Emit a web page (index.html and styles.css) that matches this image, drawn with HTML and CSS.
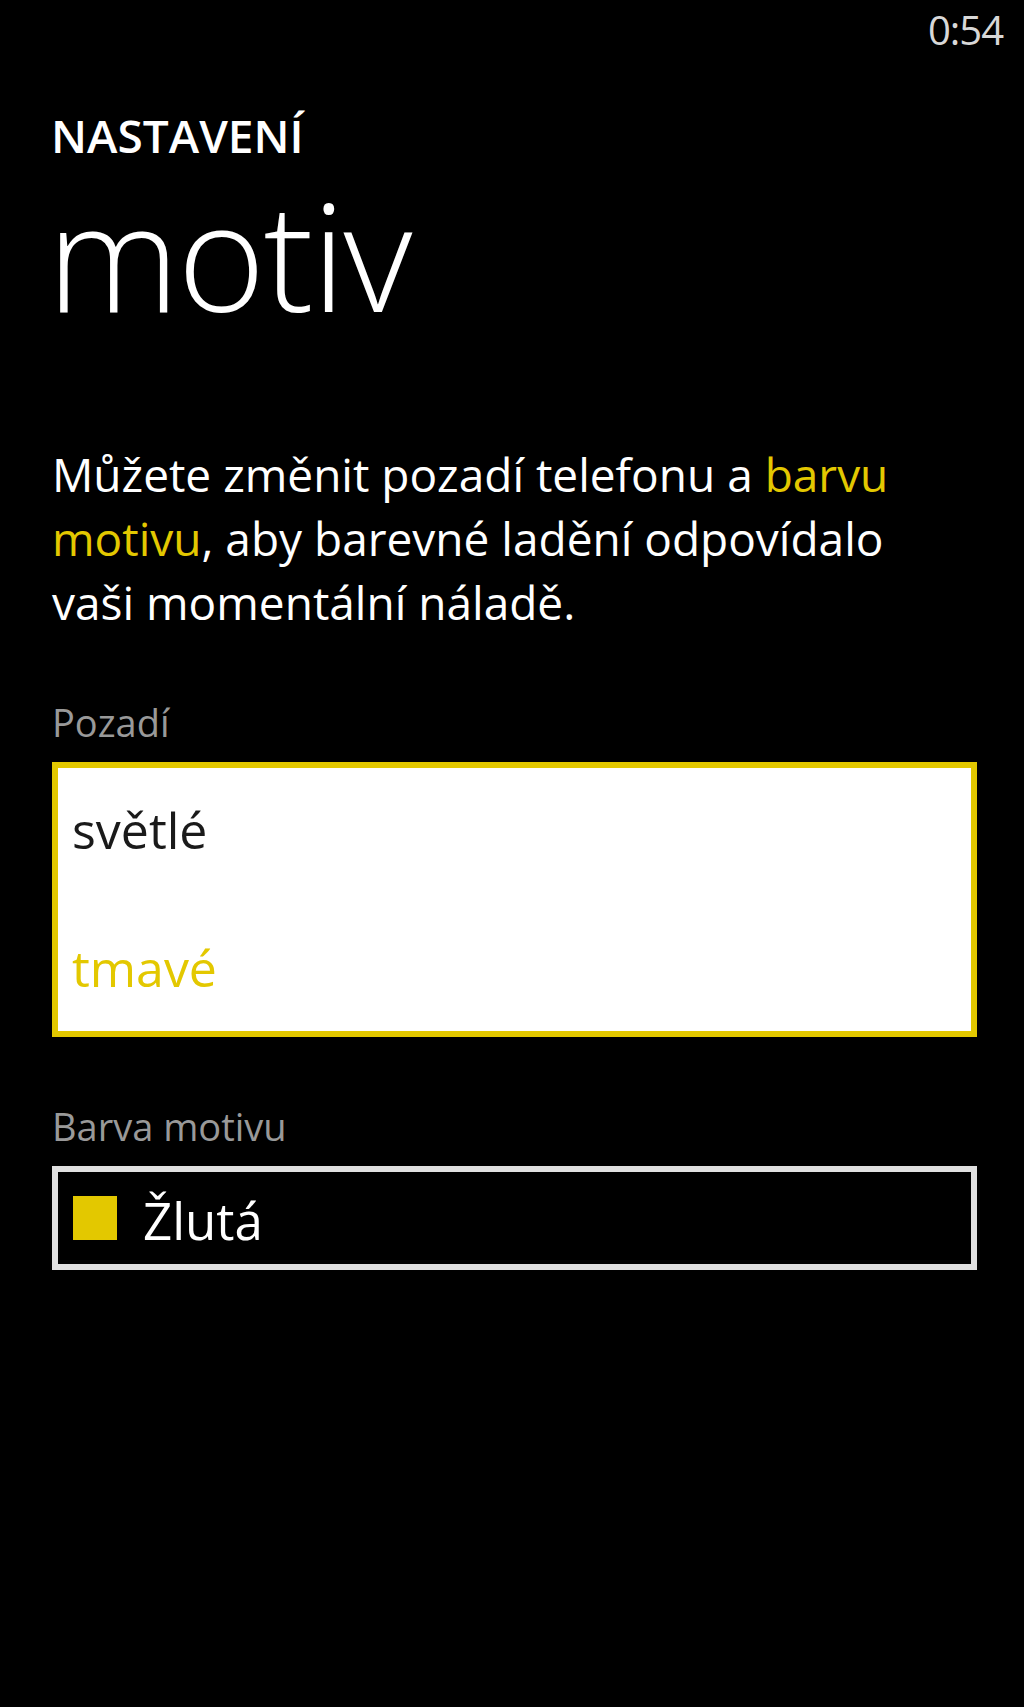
FILE: index.html
```html
<!DOCTYPE html>
<html lang="cs">
<head>
<meta charset="utf-8">
<title>motiv</title>
<link rel="stylesheet" href="styles.css">
</head>
<body>
<div class="phone">
  <div class="status-bar">
    <span class="clock">0:54</span>
  </div>
  <header class="page-header">
    <div class="app-title">NASTAVENÍ</div>
    <h1 class="page-title">motiv</h1>
  </header>
  <main class="content">
    <p class="intro">Můžete změnit pozadí telefonu a <span class="accent">barvu</span> <span class="accent">motivu</span>, aby barevné ladění odpovídalo vaši momentální náladě.</p>

    <div class="field-label">Pozadí</div>
    <div class="picker picker-open">
      <div class="picker-item">světlé</div>
      <div class="picker-item picker-item-selected">tmavé</div>
    </div>

    <div class="field-label field-label-second">Barva motivu</div>
    <div class="picker picker-closed">
      <span class="swatch"></span>
      <span class="picker-value">Žlutá</span>
    </div>
  </main>
</div>
</body>
</html>
```

FILE: styles.css
```css
html, body {
  margin: 0;
  padding: 0;
  background: #000;
}

body {
  font-family: "Open Sans", "Noto Sans", "DejaVu Sans", sans-serif;
  color: #fff;
}

.phone {
  width: 1024px;
  min-height: 1707px;
  background: #000;
}

.status-bar {
  height: 60px;
  display: flex;
  justify-content: flex-end;
  padding-right: 21px;
}

.clock {
  font-size: 40px;
  line-height: 60px;
  color: #d8d8d8;
  letter-spacing: -1px;
}

.page-header {
  padding: 46px 47px 0 51px;
}

.app-title {
  font-size: 46px;
  font-weight: 600;
  line-height: 58px;
  letter-spacing: 0;
}

.page-title {
  margin: 15px 0 0 -4px;
  font-size: 150px;
  font-weight: 300;
  line-height: 150px;
  letter-spacing: -2px;
}

.content {
  padding: 0 47px 0 52px;
}

.intro {
  margin: 113px 0 0 0;
  font-size: 46px;
  line-height: 64px;
}

.accent {
  color: #e3c800;
}

.field-label {
  margin-top: 63px;
  font-size: 38px;
  line-height: 50px;
  color: #999;
}

.field-label-second {
  margin-top: 64px;
}

.picker {
  margin-top: 15px;
  box-sizing: border-box;
}

.picker-open {
  height: 275px;
  border: 6px solid #e3c800;
  background: #fff;
  padding: 22px 14px 0 14px;
  display: flex;
  flex-direction: column;
  gap: 58px;
}

.picker-item {
  font-size: 50px;
  line-height: 80px;
  color: #1a1a1a;
}

.picker-item-selected {
  color: #e3c800;
}

.picker-closed {
  height: 104px;
  border: 6px solid #e0e0e0;
  background: #000;
  display: flex;
  align-items: center;
  padding: 0 15px;
  gap: 26px;
}

.swatch {
  width: 44px;
  height: 44px;
  background: #e3c800;
  flex: none;
}

.picker-value {
  font-size: 51px;
  line-height: 60px;
  color: #fff;
  padding-top: 4px;
}
```
